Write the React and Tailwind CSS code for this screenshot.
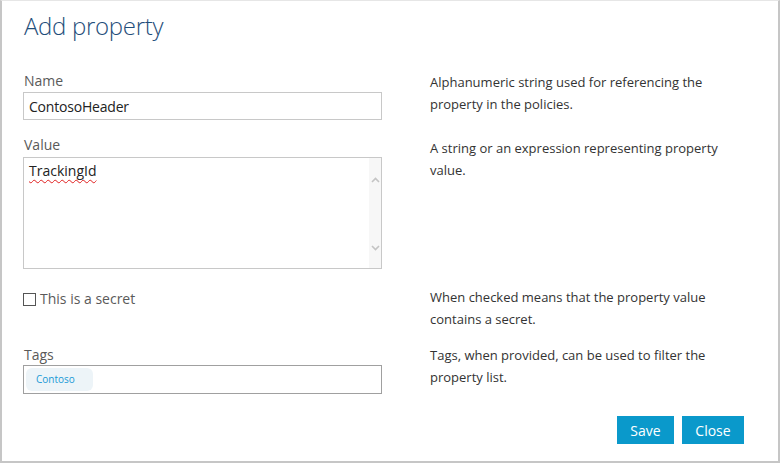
import React from "react";

const font = { fontFamily: '"Open Sans", "Noto Sans", sans-serif' };

function Chevron({ up }) {
  return (
    <svg width="9" height="6" viewBox="0 0 9 6" className="block">
      <path
        d={up ? "M1 5 L4.5 1.5 L8 5" : "M1 1 L4.5 4.5 L8 1"}
        fill="none"
        stroke="#c4c4c4"
        strokeWidth="1.6"
      />
    </svg>
  );
}

export default function App() {
  return (
    <div className="w-[780px] h-[464px] bg-white" style={font}>
      <div className="w-[780px] h-[463px] border-l-2 border-r-2 border-b-2 border-t border-l-[#c6c6c6] border-r-[#c6c6c6] border-b-[#c6c6c6] border-t-[#e6e6e6] flex flex-col pl-[21px] pr-[34px]">
        <div className="pt-[9px] text-[24px] leading-[32px] font-light tracking-[-0.3px] text-[#1f4e7a] pl-[1px]">
          Add property
        </div>

        {/* Name row */}
        <div className="flex mt-[29px]">
          <div className="w-[359px] flex flex-col">
            <div className="h-[20px] text-[14px] leading-[20px] text-[#5a5a5a] pl-[1px]">Name</div>
            <div className="mt-[1px] h-[28px] border border-[#c8c8c8] flex items-center pl-[5px] text-[14px] tracking-[-0.2px] text-[#222]">
              ContosoHeader
            </div>
          </div>
          <div className="ml-[48px] w-[300px] text-[13px] leading-[22px] text-[#333]">
            Alphanumeric string used for referencing the property in the policies.
          </div>
        </div>

        {/* Value row */}
        <div className="flex mt-[15px]">
          <div className="w-[359px] flex flex-col">
            <div className="h-[20px] text-[14px] leading-[20px] text-[#5a5a5a] pl-[1px]">Value</div>
            <div className="mt-[2px] h-[112px] border border-[#c8c8c8] flex">
              <div className="flex-1 pl-[5px] pt-[3px] text-[14px] leading-[20px] text-[#222]">
                <span className="underline decoration-wavy decoration-[#e02020] decoration-1 underline-offset-[3px]">
                  TrackingId
                </span>
              </div>
              <div className="w-[12px] bg-[#f7f7f7] flex flex-col items-center justify-between pt-[19px] pb-[17px]">
                <Chevron up />
                <Chevron />
              </div>
            </div>
          </div>
          <div className="ml-[48px] w-[300px] pt-[2px] text-[13px] leading-[22px] text-[#333]">
            A string or an expression representing property value.
          </div>
        </div>

        {/* Secret row */}
        <div className="flex mt-[17px]">
          <div className="w-[359px] flex items-start pt-[7px]">
            <div className="w-[13px] h-[13px] border border-[#555] bg-white" />
            <div className="ml-[4px] -mt-[4px] text-[14px] leading-[20px] text-[#5a5a5a]">This is a secret</div>
          </div>
          <div className="ml-[48px] w-[300px] text-[13px] leading-[22px] text-[#333]">
            When checked means that the property value contains a secret.
          </div>
        </div>

        {/* Tags row */}
        <div className="flex mt-[15px]">
          <div className="w-[359px] flex flex-col">
            <div className="h-[20px] text-[14px] leading-[20px] text-[#5a5a5a] pl-[1px]">Tags</div>
            <div className="h-[29px] border border-[#a0a0a0] flex items-center pl-[2px]">
              <div className="w-[67px] h-[23px] rounded-[6px] bg-[#edf4f8] flex items-center pl-[10px] text-[10px] text-[#1a9ad6]">
                Contoso
              </div>
            </div>
          </div>
          <div className="ml-[48px] w-[300px] -mt-[1px] text-[13px] leading-[22px] text-[#333]">
            Tags, when provided, can be used to filter the property list.
          </div>
        </div>

        {/* Buttons */}
        <div className="flex justify-end gap-[8px] mt-[22px]">
          <div className="w-[57px] h-[28px] bg-[#0a99cb] text-white text-[14px] flex items-center justify-center">
            Save
          </div>
          <div className="w-[62px] h-[28px] bg-[#0a99cb] text-white text-[14px] flex items-center justify-center">
            Close
          </div>
        </div>
      </div>
    </div>
  );
}
